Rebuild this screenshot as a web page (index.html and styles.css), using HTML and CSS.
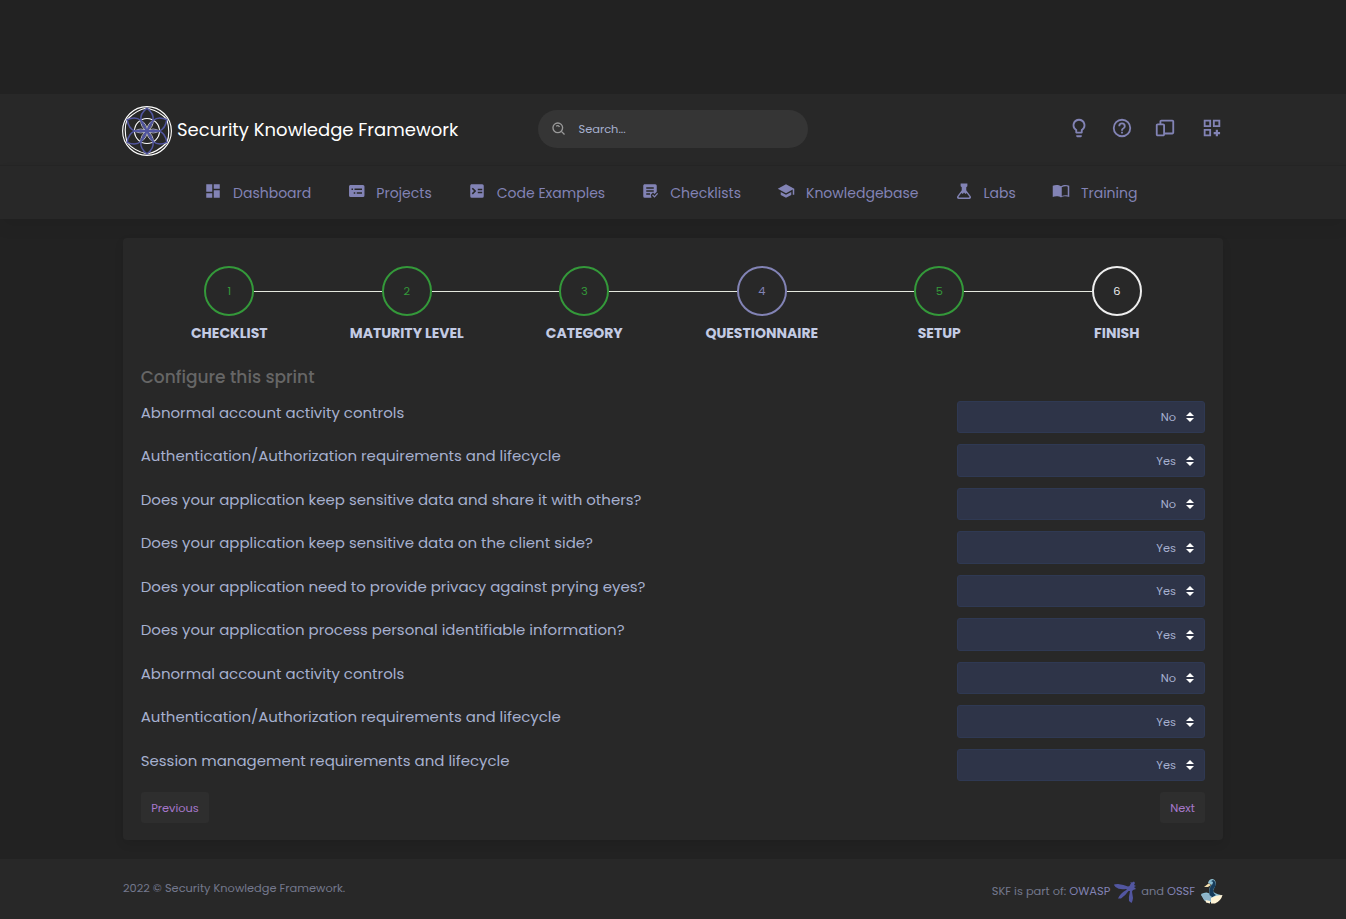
FILE: index.html
```
<!DOCTYPE html>
<html lang="en">
<head>
<meta charset="utf-8">
<title>Security Knowledge Framework</title>
<link rel="stylesheet" href="styles.css">
</head>
<body>
<svg class="defs" width="0" height="0"><defs>
  <path id="petal" d="M0 0C-5-6-11-14.500 0-22.800C11-14.500 5-6 0 0"/>
  <path id="seed" d="M0 0Q6-3.800 12.500 0Q6 3.800 0 0"/>
  <path id="rim" d="M0-23Q-10-21.500-20-11.500"/>
  <symbol id="sort" viewBox="0 0 8 10"><path d="M4 0L8 4H0ZM4 10L0 6H8Z"/></symbol>
</defs></svg>
<header class="topbar">
  <div class="container topbar-row">
    <a class="brand">
      <svg class="logo" viewBox="-25 -25 50 50">
        <g class="logo-white"><circle r="24.400"/><circle r="12.500"/>
          <g class="logo-seeds"><use href="#seed"/><use href="#seed" transform="rotate(60)"/><use href="#seed" transform="rotate(120)"/><use href="#seed" transform="rotate(180)"/><use href="#seed" transform="rotate(240)"/><use href="#seed" transform="rotate(300)"/></g>
          <use href="#rim"/><use href="#rim" transform="rotate(60)"/><use href="#rim" transform="rotate(120)"/><use href="#rim" transform="rotate(180)"/><use href="#rim" transform="rotate(240)"/><use href="#rim" transform="rotate(300)"/>
        </g>
        <g class="logo-blue"><use href="#petal"/><use href="#petal" transform="rotate(60)"/><use href="#petal" transform="rotate(120)"/><use href="#petal" transform="rotate(180)"/><use href="#petal" transform="rotate(240)"/><use href="#petal" transform="rotate(300)"/></g>
      </svg>
      <span class="brand-name">Security Knowledge Framework</span>
    </a>
    <div class="search">
      <svg class="search-icon" viewBox="0 0 14 14"><circle cx="6" cy="6" r="5"/><path d="M9.700 9.700L13 13M4.300 4.200Q6.700 2.800 7.700 5.300"/></svg>
      <span class="search-text">Search...</span>
    </div>
    <div class="tools">
      <svg class="tool" viewBox="0 0 24 24"><path d="M9 21c0 .55.45 1 1 1h4c.55 0 1-.45 1-1v-1H9zM12 2a7 7 0 0 0-4 12.740V17c0 .55.45 1 1 1h6c.55 0 1-.45 1-1v-2.260A7 7 0 0 0 12 2m2.850 11.100-.85.6V16h-4v-2.300l-.85-.6A5 5 0 1 1 14.850 13.100"/></svg>
      <svg class="tool" viewBox="0 0 24 24"><path d="M11 18h2v-2h-2zm1-16a10 10 0 1 0 0 20 10 10 0 0 0 0-20m0 18a8 8 0 1 1 0-16 8 8 0 0 1 0 16m0-14a4 4 0 0 0-4 4h2a2 2 0 1 1 4 0c0 2-3 1.750-3 5h2c0-2.250 3-2.500 3-5a4 4 0 0 0-4-4"/></svg>
      <svg class="tool" viewBox="0 0 24 24"><path d="M20 3H8C6.900 3 6 3.900 6 5v2H4C2.900 7 2 7.900 2 9v10c0 1.100.9 2 2 2h6c1.100 0 2-.9 2-2h8c1.100 0 2-.9 2-2V5c0-1.100-.9-2-2-2M10 19H4V9h6zm10-2h-8V9c0-1.100-.9-2-2-2H8V5h12z"/></svg>
      <svg class="tool grid-tool" viewBox="0 0 24 24"><path d="M3 11h8V3H3zm2-6h4v4H5zM13 3v8h8V3zm6 6h-4V5h4zM3 21h8v-8H3zm2-6h4v4H5zM18.500 14h-2.400v2.300h-2.300v2.400h2.300V21h2.400v-2.300h2.300v-2.400h-2.300z"/></svg>
    </div>
  </div>
</header>
<nav class="menu">
  <a class="item"><svg viewBox="0 0 24 24"><path d="M3 13h8V3H3zm0 8h8v-6H3zm10 0h8V11h-8zm0-18v6h8V3z"/></svg><span>Dashboard</span></a>
  <a class="item"><svg viewBox="0 0 24 24"><path fill-rule="evenodd" d="M4.700 4h16.600a2 2 0 0 1 2 2v12a2 2 0 0 1-2 2H4.700a2 2 0 0 1-2-2V6c0-1.100.9-2 2-2M6 8.500v2h2v-2zm4 0v2h10v-2zm-1 5v2h2v-2zm4 0v2h7v-2z"/></svg><span>Projects</span></a>
  <a class="item"><svg viewBox="0 0 24 24"><path fill-rule="evenodd" d="M5 3h14a2 2 0 0 1 2 2v14a2 2 0 0 1-2 2H5a2 2 0 0 1-2-2V5c0-1.100.9-2 2-2M5 9l3 3-3 3 1.500 1.500L11 12 6.500 7.500zm8 0v2h6V9zm0 4v2h6v-2z"/></svg><span>Code Examples</span></a>
  <a class="item"><svg viewBox="0 0 24 24"><path fill-rule="evenodd" d="M5 3h14a2 2 0 0 1 2 2v8l-3 3-2-2-3 3 1 4H5a2 2 0 0 1-2-2V5c0-1.100.9-2 2-2M7 7v2h10V7zm0 4v2h10v-2zm0 4v2h5v-2z"/><path d="M21.500 14.500L18 18.500l-2-2-1.300 1.300L18 21l4.800-5.200z"/></svg><span>Checklists</span></a>
  <a class="item"><svg viewBox="0 0 24 24"><path d="M5 13.180v4L12 21l7-3.820v-4L12 17zM12 3L1 9l11 6 9-4.910V17h2V9z"/></svg><span>Knowledgebase</span></a>
  <a class="item"><svg viewBox="0 0 24 24"><path fill-rule="evenodd" d="M7.500 2h9v3.500L15 7v4l6 8c1 1.700 0 3.500-2 3.500H5c-2 0-3-1.800-2-3.500l6-8V7L7.500 5.500zM8.500 14.500 5 19.300c-.5.700-.2 1.200.5 1.200h13c.7 0 1-.5.500-1.200l-3.500-4.800-1.500 1.500-2-2-1.500 2z"/></svg><span>Labs</span></a>
  <a class="item"><svg viewBox="0 0 24 24"><path fill-rule="evenodd" d="M12 5.500C9 3.500 4 3.500 1 5v15c3-1.200 8-1.200 11 .5 3-1.700 8-1.700 11-.5V5c-3-1.500-8-1.500-11 .5m9 12.500c-2.500-.7-5.500-.4-8 .5V7c2.500-1.300 5.500-1.500 8-.8z"/></svg><span>Training</span></a>
</nav>
<main class="container card">
  <ol class="steps">
    <li class="step done"><b>1</b><span>CHECKLIST</span></li>
    <li class="step done"><b>2</b><span>MATURITY LEVEL</span></li>
    <li class="step done"><b>3</b><span>CATEGORY</span></li>
    <li class="step active"><b>4</b><span>QUESTIONNAIRE</span></li>
    <li class="step done"><b>5</b><span>SETUP</span></li>
    <li class="step"><b>6</b><span>FINISH</span></li>
  </ol>
  <h1 class="title">Configure this sprint</h1>
  <div class="questions">
    <div class="row"><p>Abnormal account activity controls</p><div class="select">No<svg><use href="#sort"/></svg></div></div>
    <div class="row"><p>Authentication/Authorization requirements and lifecycle</p><div class="select">Yes<svg><use href="#sort"/></svg></div></div>
    <div class="row"><p>Does your application keep sensitive data and share it with others?</p><div class="select">No<svg><use href="#sort"/></svg></div></div>
    <div class="row"><p>Does your application keep sensitive data on the client side?</p><div class="select">Yes<svg><use href="#sort"/></svg></div></div>
    <div class="row"><p>Does your application need to provide privacy against prying eyes?</p><div class="select">Yes<svg><use href="#sort"/></svg></div></div>
    <div class="row"><p>Does your application process personal identifiable information?</p><div class="select">Yes<svg><use href="#sort"/></svg></div></div>
    <div class="row"><p>Abnormal account activity controls</p><div class="select">No<svg><use href="#sort"/></svg></div></div>
    <div class="row"><p>Authentication/Authorization requirements and lifecycle</p><div class="select">Yes<svg><use href="#sort"/></svg></div></div>
    <div class="row"><p>Session management requirements and lifecycle</p><div class="select">Yes<svg><use href="#sort"/></svg></div></div>
  </div>
  <div class="actions"><button class="btn prev">Previous</button><button class="btn next">Next</button></div>
</main>
<footer class="footer">
  <div class="container footer-row">
    <span class="copyright">2022 © Security Knowledge Framework.</span>
    <div class="partners">
      <span>SKF is part of:</span><a class="owasp">OWASP</a>
      <svg class="wasp" viewBox="0 0 22 22"><path d="M0 4Q0 3 4 3Q10 3.500 14 5.500L15.500 5L17 2L16 1L18 1.500L20 .5L21 2L20 4L22 5L20 6L22 8L19 9L18 10.500L19 17Q18.500 21 17.500 22L15 20Q14.500 16 16 10L14.500 10Q11 15 7 17.500L4 17.500Q6 12.500 13 8.500L12 8Q5 9 1.500 6Z"/></svg>
      <span>and</span><a class="ossf">OSSF</a>
      <svg class="goose" viewBox="0 0 22 25"><path fill="#8fc1d5" d="M7 4Q8 0 11.500 0Q15.500 1 14.500 6L12 12Q13 14.500 20 16L14 22Q7 25 3 21L0 15Q6 12 9 15L8 12Q8 8 11 6Z"/><path fill="#173c5b" d="M8.500 3Q10 1.500 12 3Q12 5 10 7Q7 11 9 15L7 17L10 19L15 16Q11.500 14 12.500 10L14.500 7Q15 2 12 1Z"/><path fill="#f3dfae" d="M3 8L7.500 4.500L10 6L7 8Z"/><path fill="#8db4c9" d="M0 16Q6 12.500 11 18L9 23L4 22Z"/><path fill="#fff4d6" d="M10 19Q15 16 21.500 16Q20 22 14 24.500L10 24.500ZM4.500 21L9 22L9 24.500L5 23.500Z"/></svg>
    </div>
  </div>
</footer>
</body>
</html>
```
FILE: styles.css
```
* { box-sizing: border-box; }
body { margin: 0; padding-top: 94px; min-height: 919px; background: #222; color: #a6b0cf; font-family: Poppins, Inter, "Noto Sans", sans-serif; font-size: 11.4px; line-height: 1.5; }
.defs { position: absolute; }
.container { width: 1100px; margin: 0 auto; }

.topbar { height: 72px; background: #282828; border-bottom: 1px solid #252525; }
.topbar-row { display: grid; grid-template-columns: 415px 270px 1fr; height: 71px; }
.brand { display: flex; align-items: center; padding-top: 3px; margin-left: -1px; color: #fff; }
.logo { width: 50px; height: 50px; margin-right: 5px; fill: none; }
.logo-white { stroke: #fff; stroke-width: 1.1; }
.logo-seeds { stroke-width: .7; }
.logo-blue { stroke: #5256a0; stroke-width: 1.5; }
.brand-name { font-size: 18px; white-space: nowrap; margin-top: -3px; }
.search { display: flex; align-items: center; height: 38px; margin-top: 16px; padding-left: 14px; border-radius: 19px; background: #353535; }
.search-icon { width: 13.500px; height: 13.500px; margin-right: 13px; fill: none; stroke: #999; stroke-width: 1.4; }
.search-text { padding-top: 2px; }
.tools { display: flex; padding: 22.600px 0 0 260px; gap: 21px; }
.tool { flex: none; width: 22px; height: 22px; fill: #8283b5; }
.grid-tool { margin-left: 3.600px; }

.menu { display: flex; justify-content: flex-start; gap: 36px; height: 53px; padding: 16px 0 0 204px; background: #282828; color: #8283b5; font-size: 14.030px; line-height: 22px; box-shadow: 0 8px 16px rgba(0, 0, 0, .06); white-space: nowrap; }
.item { display: flex; gap: 11px; }
.item svg { width: 18px; height: 18px; fill: currentColor; }

.card { margin-top: 19px; height: 602px; padding: 28px 18px 0; border-radius: 4px; background: #282828; box-shadow: 0 4px 10px rgba(0, 0, 0, .09); }
.steps { display: grid; grid-template-columns: repeat(6, 1fr); margin: 0 -.5px; padding: 0; list-style: none; }
.step { display: grid; grid-template-columns: 1fr 50px 1fr; color: #eee; }
.step::before, .step::after { content: ""; height: 1px; margin-top: 25px; background: #e5e9df; grid-row: 1; }
.step::after { grid-column: 3; }
.step:first-child::before, .step:last-child::after { background: none; }
.step b { grid-area: 1 / 2; width: 50px; height: 50px; border: 2px solid currentColor; border-radius: 50%; text-align: center; font-weight: 400; line-height: 46px; }
.step span { grid-area: 2 / 1 / auto / 4; margin-top: 6px; text-align: center; color: #c3cbe4; font-size: 14px; font-weight: 700; line-height: 22px; }
.done { color: #34993a; }
.active { color: #8283b5; }
.title { margin: 20px 0 0 -.3px; color: #666; font-size: 17.050px; font-weight: 500; line-height: 26px; }
.questions { display: grid; gap: 11px; margin-top: 10.700px; }
.row { display: flex; justify-content: space-between; height: 32.500px; }
.row p { margin: 0 0 0 -.3px; font-size: 14.990px; line-height: 23px; white-space: nowrap; }
.select { display: flex; align-items: center; justify-content: flex-end; gap: 10px; width: 248px; padding: 1.500px 10px 0 0; border: 1px solid #2f3953; border-radius: 3px; background: #2e3448; }
.select svg { width: 8px; height: 10px; margin-bottom: .9px; fill: #fff; }
.actions { display: flex; justify-content: space-between; margin-top: 11px; }
.btn { height: 31px; padding: 1.500px 0 0; border: 0; border-radius: 3px; background: #2e2e2e; color: #a678cb; font: inherit; }
.prev { width: 68px; }
.next { width: 45px; }

.footer { height: 60px; margin-top: 19px; background: #282828; color: #74788d; }
.footer-row { display: flex; justify-content: space-between; padding-top: 20px; white-space: nowrap; }
.copyright { padding-top: 1px; }
.partners { display: flex; align-items: center; height: 25px; }
.partners a { color: #8283b5; }
.owasp { margin-left: 3px; }
.wasp { width: 22px; height: 22px; margin: 0 5px 0 4px; fill: #5256a0; }
.ossf { margin-left: 3px; }
.goose { width: 22px; height: 25px; margin: 0 .4px 0 5.600px; }
```
